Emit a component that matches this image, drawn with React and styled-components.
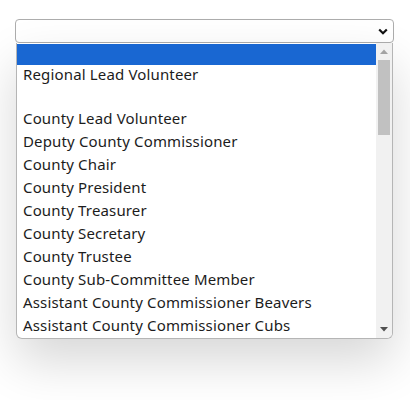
import styled, { createGlobalStyle } from 'styled-components'

const options = [
  '',
  'Regional Lead Volunteer',
  '',
  'County Lead Volunteer',
  'Deputy County Commissioner',
  'County Chair',
  'County President',
  'County Treasurer',
  'County Secretary',
  'County Trustee',
  'County Sub-Committee Member',
  'Assistant County Commissioner Beavers',
  'Assistant County Commissioner Cubs',
]

const GlobalStyle = createGlobalStyle`
  body {
    margin: 0;
    background: #fff;
    font-family: 'Noto Sans', 'Open Sans', sans-serif;
  }
`

export default function App() {
  return (
    <Page>
      <GlobalStyle />
      <SelectBox>
        <svg width='10' height='7' viewBox='0 0 10 7'>
          <polyline points='1.2,1.5 5,5.2 8.8,1.5' fill='none' stroke='#111' strokeWidth='2.2' />
        </svg>
      </SelectBox>
      <Dropdown>
        <List>
          {options.map((label, i) => (
            <Option key={i} selected={i === 0} empty={!label}>
              {label}
            </Option>
          ))}
        </List>
        <Scrollbar>
          <Arrow>
            <svg width='8' height='5' viewBox='0 0 8 5'>
              <polygon points='0,5 4,0.5 8,5' fill='#a3a3a3' />
            </svg>
          </Arrow>
          <Track>
            <Thumb />
          </Track>
          <Arrow>
            <svg width='8' height='5' viewBox='0 0 8 5'>
              <polygon points='0,0 8,0 4,4.5' fill='#505050' />
            </svg>
          </Arrow>
        </Scrollbar>
      </Dropdown>
    </Page>
  )
}

const Page = styled.div`
  width: 410px;
  height: 400px;
  padding: 19px 16px 0 15px;
  box-sizing: border-box;
  overflow: hidden;
`

const SelectBox = styled.div`
  height: 24px;
  box-sizing: border-box;
  border: 1px solid #adadad;
  border-radius: 4px;
  background: #fff;
  display: flex;
  align-items: center;
  justify-content: flex-end;
  padding-right: 5px;
`

const Dropdown = styled.div`
  margin-left: 1px;
  margin-right: 1px;
  height: 296px;
  box-sizing: border-box;
  border: 1px solid #b5b5b5;
  border-top: none;
  border-radius: 0 0 6px 6px;
  background: #fff;
  display: flex;
  overflow: hidden;
  box-shadow: 0 22px 50px rgba(0, 0, 0, 0.16);
`

const List = styled.div`
  flex: 1;
  display: flex;
  flex-direction: column;
  padding-top: 1px;
`

const Option = styled.div`
  height: ${({ empty }) => (empty ? 21 : 23)}px;
  box-sizing: border-box;
  flex-shrink: 0;
  display: flex;
  align-items: center;
  padding: 0 0 5px 6px;
  font-size: 15px;
  letter-spacing: 0.15px;
  color: #1c1c1c;
  white-space: nowrap;
  background: ${({ selected }) => (selected ? '#1967d2' : 'transparent')};
`

const Scrollbar = styled.div`
  width: 16px;
  background: #f1f1f1;
  display: flex;
  flex-direction: column;
`

const Arrow = styled.div`
  height: 17px;
  display: flex;
  align-items: center;
  justify-content: center;
`

const Track = styled.div`
  flex: 1;
  padding: 0 2px;
`

const Thumb = styled.div`
  height: 75px;
  background: #c1c1c1;
`
